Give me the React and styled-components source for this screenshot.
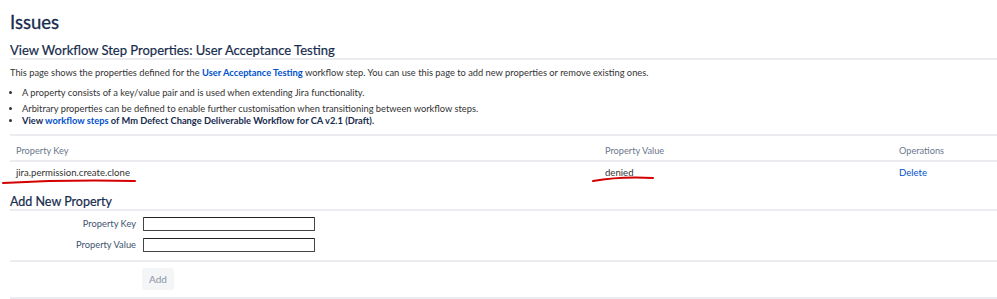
import React from 'react';
import styled, { createGlobalStyle } from 'styled-components';

const GlobalStyle = createGlobalStyle`
  html, body {
    margin: 0;
    padding: 0;
    background: #fff;
  }
  body {
    font-family: Lato, "Open Sans", sans-serif;
    color: #333;
  }
`;

const Page = styled.div`
  position: relative;
  width: 997px;
  height: 299px;
  overflow: hidden;
  padding-left: 10px;
  box-sizing: border-box;
`;

const PageTitle = styled.h1`
  margin: 0;
  padding: 10px 0 8px;
  font-size: 18.5px;
  font-weight: 400;
  line-height: 24px;
  color: #172b4d;
  -webkit-text-stroke: 0.3px #172b4d;
`;

const SectionTitle = styled.h2`
  margin: 0;
  font-size: ${(p) => p.$size || 13}px;
  font-weight: 400;
  line-height: ${(p) => p.$lh || 16}px;
  color: #172b4d;
  -webkit-text-stroke: 0.2px #172b4d;
  border-bottom: 2px solid #ebecf0;
`;

const Intro = styled.p`
  margin: 0;
  padding: 6px 0;
  font-size: 9.3px;
  line-height: 14px;
`;

const Strong = styled.strong`
  font-weight: 700;
  color: ${(p) => (p.$link ? '#0052cc' : '#172b4d')};
`;

const Bullets = styled.ul`
  margin: 0;
  padding: 1px 0 7px 12px;
  border-bottom: 2px solid #ebecf0;
  font-size: 9.3px;

  li {
    line-height: 12px;
  }
  li:first-child {
    margin-bottom: 4px;
  }
`;

const Table = styled.table`
  width: 100%;
  border-collapse: collapse;
  font-size: 9.6px;

  th {
    text-align: left;
    font-weight: 400;
    color: #6b778c;
    font-size: 9.2px;
    line-height: 12px;
    padding: 9px 6px 3px;
    border-bottom: 2px solid #ebecf0;
  }
  td {
    line-height: 12px;
    padding: 5px 6px 16px;
    color: #333;
  }
`;

const KeyCell = styled.th`
  width: 577px;
`;

const ValueCell = styled.th`
  width: 282px;
`;

const DeleteLink = styled.a`
  color: #0052cc;
  text-decoration: none;
`;

const Form = styled.div`
  display: grid;
  grid-template-columns: 126px 172px;
  grid-auto-rows: 14px;
  column-gap: 7px;
  row-gap: 7px;
  padding: 6px 0 8px;
  border-bottom: 2px solid #ebecf0;
  align-items: center;
`;

const Label = styled.label`
  text-align: right;
  font-size: 9.3px;
  line-height: 14px;
  color: #42526e;
`;

const Input = styled.input`
  box-sizing: border-box;
  width: 172px;
  height: 14px;
  margin: 0;
  border: 1px solid #444;
  border-top-color: #222;
  border-radius: 1px;
  padding: 0;
  font-size: 10px;
`;

const Actions = styled.div`
  padding: 6px 0 7px 132px;
  border-bottom: 2px solid #ebecf0;
`;

const Button = styled.button`
  display: block;
  width: 32px;
  height: 22px;
  border: none;
  border-radius: 3px;
  background: #f4f5f7;
  color: #8993a4;
  font-family: Lato, "Open Sans", sans-serif;
  font-size: 10px;
  padding: 0;
`;

const Scribble = styled.svg`
  position: absolute;
  left: 0;
  top: 0;
  pointer-events: none;
`;

export default function App() {
  return (
    <>
      <GlobalStyle />
      <Page>
        <PageTitle>Issues</PageTitle>
        <SectionTitle>View Workflow Step Properties: User Acceptance Testing</SectionTitle>
        <Intro>
          This page shows the properties defined for the <Strong $link>User Acceptance Testing</Strong> workflow
          step. You can use this page to add new properties or remove existing ones.
        </Intro>
        <Bullets>
          <li>A property consists of a key/value pair and is used when extending Jira functionality.</li>
          <li>Arbitrary properties can be defined to enable further customisation when transitioning between workflow steps.</li>
          <li>
            <Strong>
              View <Strong $link>workflow steps</Strong> of Mm Defect Change Deliverable Workflow for CA v2.1 (Draft).
            </Strong>
          </li>
        </Bullets>
        <Table>
          <thead>
            <tr>
              <KeyCell>Property Key</KeyCell>
              <ValueCell>Property Value</ValueCell>
              <th>Operations</th>
            </tr>
          </thead>
          <tbody>
            <tr>
              <td>jira.permission.create.clone</td>
              <td>denied</td>
              <td>
                <DeleteLink href="#">Delete</DeleteLink>
              </td>
            </tr>
          </tbody>
        </Table>
        <SectionTitle $lh={14} $size={12.5}>Add New Property</SectionTitle>
        <Form>
          <Label>Property Key</Label>
          <Input />
          <Label>Property Value</Label>
          <Input />
        </Form>
        <Actions>
          <Button>Add</Button>
        </Actions>
        <Scribble width="997" height="299">
          <path d="M3 183 C 40 181, 90 180, 135 181" stroke="#d50000" strokeWidth="2" fill="none" strokeLinecap="round" />
          <path d="M593 181 C 610 178, 635 177, 653 178" stroke="#d50000" strokeWidth="2" fill="none" strokeLinecap="round" />
        </Scribble>
      </Page>
    </>
  );
}
